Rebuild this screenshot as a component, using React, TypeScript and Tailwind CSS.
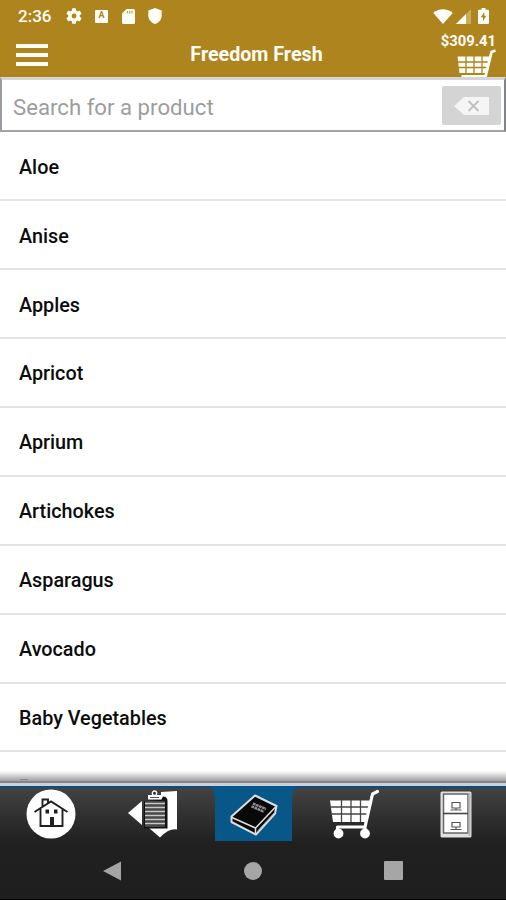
const products = [
  'Aloe',
  'Anise',
  'Apples',
  'Apricot',
  'Aprium',
  'Artichokes',
  'Asparagus',
  'Avocado',
  'Baby Vegetables',
];

function GearIcon() {
  return (
    <svg width="16" height="16" viewBox="2 2 20 20" fill="#fffdf5">
      <path d="M19.14 12.94c.04-.3.06-.61.06-.94 0-.32-.02-.64-.07-.94l2.03-1.58a.49.49 0 0 0 .12-.61l-1.92-3.32a.49.49 0 0 0-.59-.22l-2.39.96c-.5-.38-1.03-.7-1.62-.94l-.36-2.54a.48.48 0 0 0-.48-.41h-3.84c-.24 0-.43.17-.47.41l-.36 2.54c-.59.24-1.13.57-1.62.94l-2.39-.96a.48.48 0 0 0-.59.22L2.74 8.87c-.12.21-.08.47.12.61l2.03 1.58c-.05.3-.09.63-.09.94s.02.64.07.94l-2.03 1.58a.49.49 0 0 0-.12.61l1.92 3.32c.12.22.37.29.59.22l2.39-.96c.5.38 1.03.7 1.62.94l.36 2.54c.05.24.24.41.48.41h3.84c.24 0 .44-.17.47-.41l.36-2.54c.59-.24 1.13-.56 1.62-.94l2.39.96c.22.08.47 0 .59-.22l1.92-3.32a.48.48 0 0 0-.12-.61l-2.01-1.58zM12 15a3 3 0 1 1 0-6 3 3 0 0 1 0 6z" />
    </svg>
  );
}

function StatusBar() {
  return (
    <div className="flex h-8 items-center pl-[18px] pr-[16px]">
      <span className="w-[48px] text-[17px] font-medium leading-[24px]">2:36</span>
      <GearIcon />
      <div className="ml-[13px] mr-[14px] flex h-[13px] w-[13px] items-center justify-center rounded-[1px] bg-[#fffdf5] text-[9px] font-bold text-[#ae841f]">
        A
      </div>
      <svg width="13" height="15" viewBox="0 0 13 15" className="mr-[14px]">
        <path d="M4.5 0H11.5Q13 0 13 1.5V13.5Q13 15 11.5 15H1.5Q0 15 0 13.5V4.5Z" fill="#fffdf5" />
        <path d="M5.5 2v2.5M7.7 2v2.5M9.9 2v2.5" stroke="#c2a050" strokeWidth="1.2" />
      </svg>
      <svg width="14" height="16" viewBox="0 0 14 16" className="-ml-px">
        <path d="M7 0l6.7 2.6v5c0 4-2.8 7.3-6.7 8.4C3.1 14.9 0.3 11.6 0.3 7.6v-5z" fill="#fffdf5" />
      </svg>
      <svg width="20" height="15" viewBox="0 0 20 15" className="ml-auto">
        <path d="M0.3 4C5.5-1 14.5-1 19.7 4L10 15z" fill="#fffdf5" />
      </svg>
      <svg width="15" height="15" viewBox="0 0 15 15" className="ml-[3px]">
        <path d="M15 0v15H0z" fill="#c9ab64" />
        <path d="M10 5v10H0z" fill="#fffdf5" />
      </svg>
      <svg width="11" height="16" viewBox="0 0 11 16" className="ml-[7px] mr-px">
        <path d="M3.5 0h4v1.7H10q1 0 1 1V15q0 1-1 1H1q-1 0-1-1V2.7q0-1 1-1h2.5z" fill="#fffdf5" />
        <path d="M6.3 4L2.8 9.2h2.2V13l3.3-5.2H6.3z" fill="#ae841f" />
      </svg>
    </div>
  );
}

function HeaderCart() {
  return (
    <svg width="40" height="30" viewBox="0 0 40 30" className="-mt-px block shrink-0">
      <path d="M1.5 7.5H35L31.5 24H3.5Z" fill="#fffdf5" />
      <path d="M1 13H34M2 18.5H33M10 7V24M18 7V24M26 7V24" stroke="#ae841f" strokeWidth="1.3" />
      <path d="M39.5 1.5L35.5 3L29.5 27.5H5.5" fill="none" stroke="#fffdf5" strokeWidth="2.8" strokeLinejoin="round" />
    </svg>
  );
}

function Header() {
  return (
    <header className="h-[77px] bg-[#ae841f] text-[#fffdf5]">
      <StatusBar />
      <div className="grid h-[45px] grid-cols-[95px_1fr_95px]">
        <div className="flex flex-col gap-[5px] pl-4 pt-3">
          <span className="h-[4px] w-8 bg-[#fffdf5]" />
          <span className="h-[4px] w-8 bg-[#fffdf5]" />
          <span className="h-[4px] w-8 bg-[#fffdf5]" />
        </div>
        <h1 className="pl-[7px] pt-[9px] text-center text-[19.7px] font-bold leading-[27px]">Freedom Fresh</h1>
        <div className="flex h-[45px] flex-col items-end overflow-hidden pr-[10px] pt-px">
          <span className="whitespace-nowrap text-[14.8px] font-bold leading-[17px]">$309.41</span>
          <HeaderCart />
        </div>
      </div>
    </header>
  );
}

function SearchBox() {
  return (
    <div className="flex h-[55px] items-center border-b-2 border-l-2 border-r-2 border-t-[3px] border-b-[#a4a4a4] border-l-[#9b9ba0] border-r-[#81838f] border-t-[#d6d6d8] bg-white pl-[11px] pr-[3px]">
      <span className="flex-1 pt-[3px] text-[22.2px] leading-[28px] text-[#9d9d9d]">Search for a product</span>
      <div className="flex h-[39px] w-[59px] items-center justify-center rounded-[2px] bg-[#d3d4d3]">
        <svg width="35" height="18" viewBox="0 0 35 18" className="mt-px">
          <path d="M10 0H35V18H10L0 9Z" fill="#f4f5f4" />
          <path d="M14.5 4l10 10M24.5 4l-10 10" stroke="#bdbebd" strokeWidth="1.8" />
        </svg>
      </div>
    </div>
  );
}

function HomeIcon() {
  return (
    <svg width="50" height="50" viewBox="0 0 50 50">
      <circle cx="25" cy="25" r="24.5" fill="#fff" />
      <g fill="none" stroke="#202020" strokeWidth="1.9">
        <path d="M8.5 23L25 12.5L41.5 23M14.5 20V37H36.5V20M16.5 17.5V10.5H22V14.5" />
      </g>
      <path d="M24 28h4v9h-4zM19.5 20.5h3.5v4h-3.5zM28 20.5h3.5v4H28z" fill="#202020" />
    </svg>
  );
}

function OrderIcon() {
  return (
    <svg width="52" height="50" viewBox="0 0 52 50">
      <path d="M34 2L50 1V39.5Q42 38 33 47.500L22 38H34Z" fill="#fff" />
      <path d="M1 23L15 11V35Z" fill="#fff" />
      <path d="M17 11V38.5H40.5V11Q40.5 6.5 36 6.5L34 10Z" fill="#111" />
      <path d="M18 11H38V37H18Z" fill="#474747" />
      <path d="M18 13.5H38M18 17.5H38M18 21.5H38M18 25.5H38M18 29.5H38M18 33.5H38" stroke="#c8c8c8" strokeWidth="1.3" />
      <path d="M21 5H34V9.5H21Z" fill="#fff" />
      <path d="M23 7.5H32" stroke="#555" strokeWidth="1" />
      <circle cx="27.5" cy="3.2" r="2.2" fill="#333" stroke="#fff" strokeWidth="1.3" />
    </svg>
  );
}

function CatalogIcon() {
  return (
    <svg width="48" height="42" viewBox="0 0 48 42">
      <path d="M25 1.5L46.5 12L45 19.5L26 40.5L1.5 28V22.5Z" fill="#090909" stroke="#ddd" strokeWidth="2" strokeLinejoin="round" />
      <path d="M2 23.5L25.5 34L45.5 13M25.5 34V40" fill="none" stroke="#ddd" strokeWidth="1.5" />
      <path d="M28 36.5L44.5 18.5" stroke="#999" strokeWidth="1" />
      <path d="M23 9.5l13 5.5M21.5 12.3l12.5 5.5" stroke="#8d8d8d" strokeWidth="2.5" strokeDasharray="2.8 0.5" />
    </svg>
  );
}

function CartIcon() {
  return (
    <svg width="52" height="52" viewBox="0 0 52 52">
      <path d="M1 11.5H42L38 33H4Z" fill="#fff" />
      <path d="M1 18H42M2 25H40" stroke="#454545" strokeWidth="1.3" />
      <path d="M12.5 11V33M22 11V33M31.5 11V33" stroke="#454545" strokeWidth="1.3" />
      <path d="M48.5 2.5L43.5 5L36 38H8.5V43M36 38V43" fill="none" stroke="#fff" strokeWidth="3.2" strokeLinecap="round" strokeLinejoin="round" />
      <circle cx="9.5" cy="44.5" r="4.9" fill="#fff" />
      <circle cx="36" cy="44.5" r="4.9" fill="#fff" />
    </svg>
  );
}

function CabinetIcon() {
  return (
    <svg width="32" height="47" viewBox="0 0 32 47">
      <rect x="0.5" y="0.5" width="31" height="46" rx="1.5" fill="#e0e0e0" />
      <path d="M3.5 3H28V42H3.5Z" fill="#fff" stroke="#666" strokeWidth="1.5" />
      <path d="M29.5 2V45" stroke="#bbb" strokeWidth="2" />
      <path d="M3 22.5H28" stroke="#444" strokeWidth="1.6" />
      <g fill="none" stroke="#555" strokeWidth="1.2">
        <path d="M12 11.5H20V17H12ZM10.5 19H21.5M16 17V19" />
        <path d="M12 36V31.5H20V36ZM10.5 38.5H21.5M16 36V38.5" />
      </g>
    </svg>
  );
}

function TabBar() {
  return (
    <nav className="grid h-[55px] grid-cols-5">
      <div className="flex justify-center pt-[3px]">
        <HomeIcon />
      </div>
      <div className="flex justify-center pl-[2px] pt-[4px]">
        <OrderIcon />
      </div>
      <div className="flex justify-center pl-[2px]">
        <svg width="5" height="14" viewBox="0 0 5 14" className="-ml-[5px]">
          <path d="M0 0H5V14Q4 3 0 0Z" fill="#075888" />
        </svg>
        <div className="flex h-[55px] w-[77px] shrink-0 justify-center bg-[#075888] pt-[8px]">
          <CatalogIcon />
        </div>
        <svg width="5" height="14" viewBox="0 0 5 14" className="-mr-[5px]">
          <path d="M5 0H0V14Q1 3 5 0Z" fill="#075888" />
        </svg>
      </div>
      <div className="flex justify-center pl-px pt-[3px]">
        <CartIcon />
      </div>
      <div className="flex justify-center pl-px pt-[5px]">
        <CabinetIcon />
      </div>
    </nav>
  );
}

function SystemNav() {
  return (
    <div className="flex h-[59px] items-center justify-between border-b border-black pb-px pl-[102px] pr-[103px] pt-[2px]">
      <svg width="20" height="20" viewBox="0 0 20 20">
        <path d="M1 10L19 0.5V19.5Z" fill="#a4a4a4" />
      </svg>
      <span className="h-[18px] w-[18px] rounded-full bg-[#a6a6a6]" />
      <span className="h-[19px] w-[19px] rounded-[1px] bg-[#a6a6a6]" />
    </div>
  );
}

export default function App() {
  return (
    <div className="flex h-[900px] w-[506px] flex-col overflow-hidden bg-white font-[Roboto,sans-serif]">
      <Header />
      <SearchBox />
      <ul className="h-[639px] overflow-hidden">
        {products.map((name) => (
          <li
            key={name}
            className="flex h-[68.95px] items-center border-b-2 border-[#e4e4e4] pl-[19px] pt-[4px] text-[19.8px] font-medium text-[#0c0c0c]"
          >
            {name}
          </li>
        ))}
      </ul>
      <div className="h-[10px] bg-linear-to-b from-white to-[#a0a0a0]">
        <div className="ml-[20px] h-[10px] w-[8px] pt-[8px]">
          <div className="h-px bg-[#888]" />
        </div>
      </div>
      <div className="h-[5px] border-t-2 border-[#858585] bg-[#cdd0dc]" />
      <footer className="h-[114px] bg-linear-to-b from-[#444] via-[#202020] via-50% to-[#1e1e1e]">
        <div className="-mb-[2px] h-[2px] bg-[#0d4d78]" />
        <TabBar />
        <SystemNav />
      </footer>
    </div>
  );
}
